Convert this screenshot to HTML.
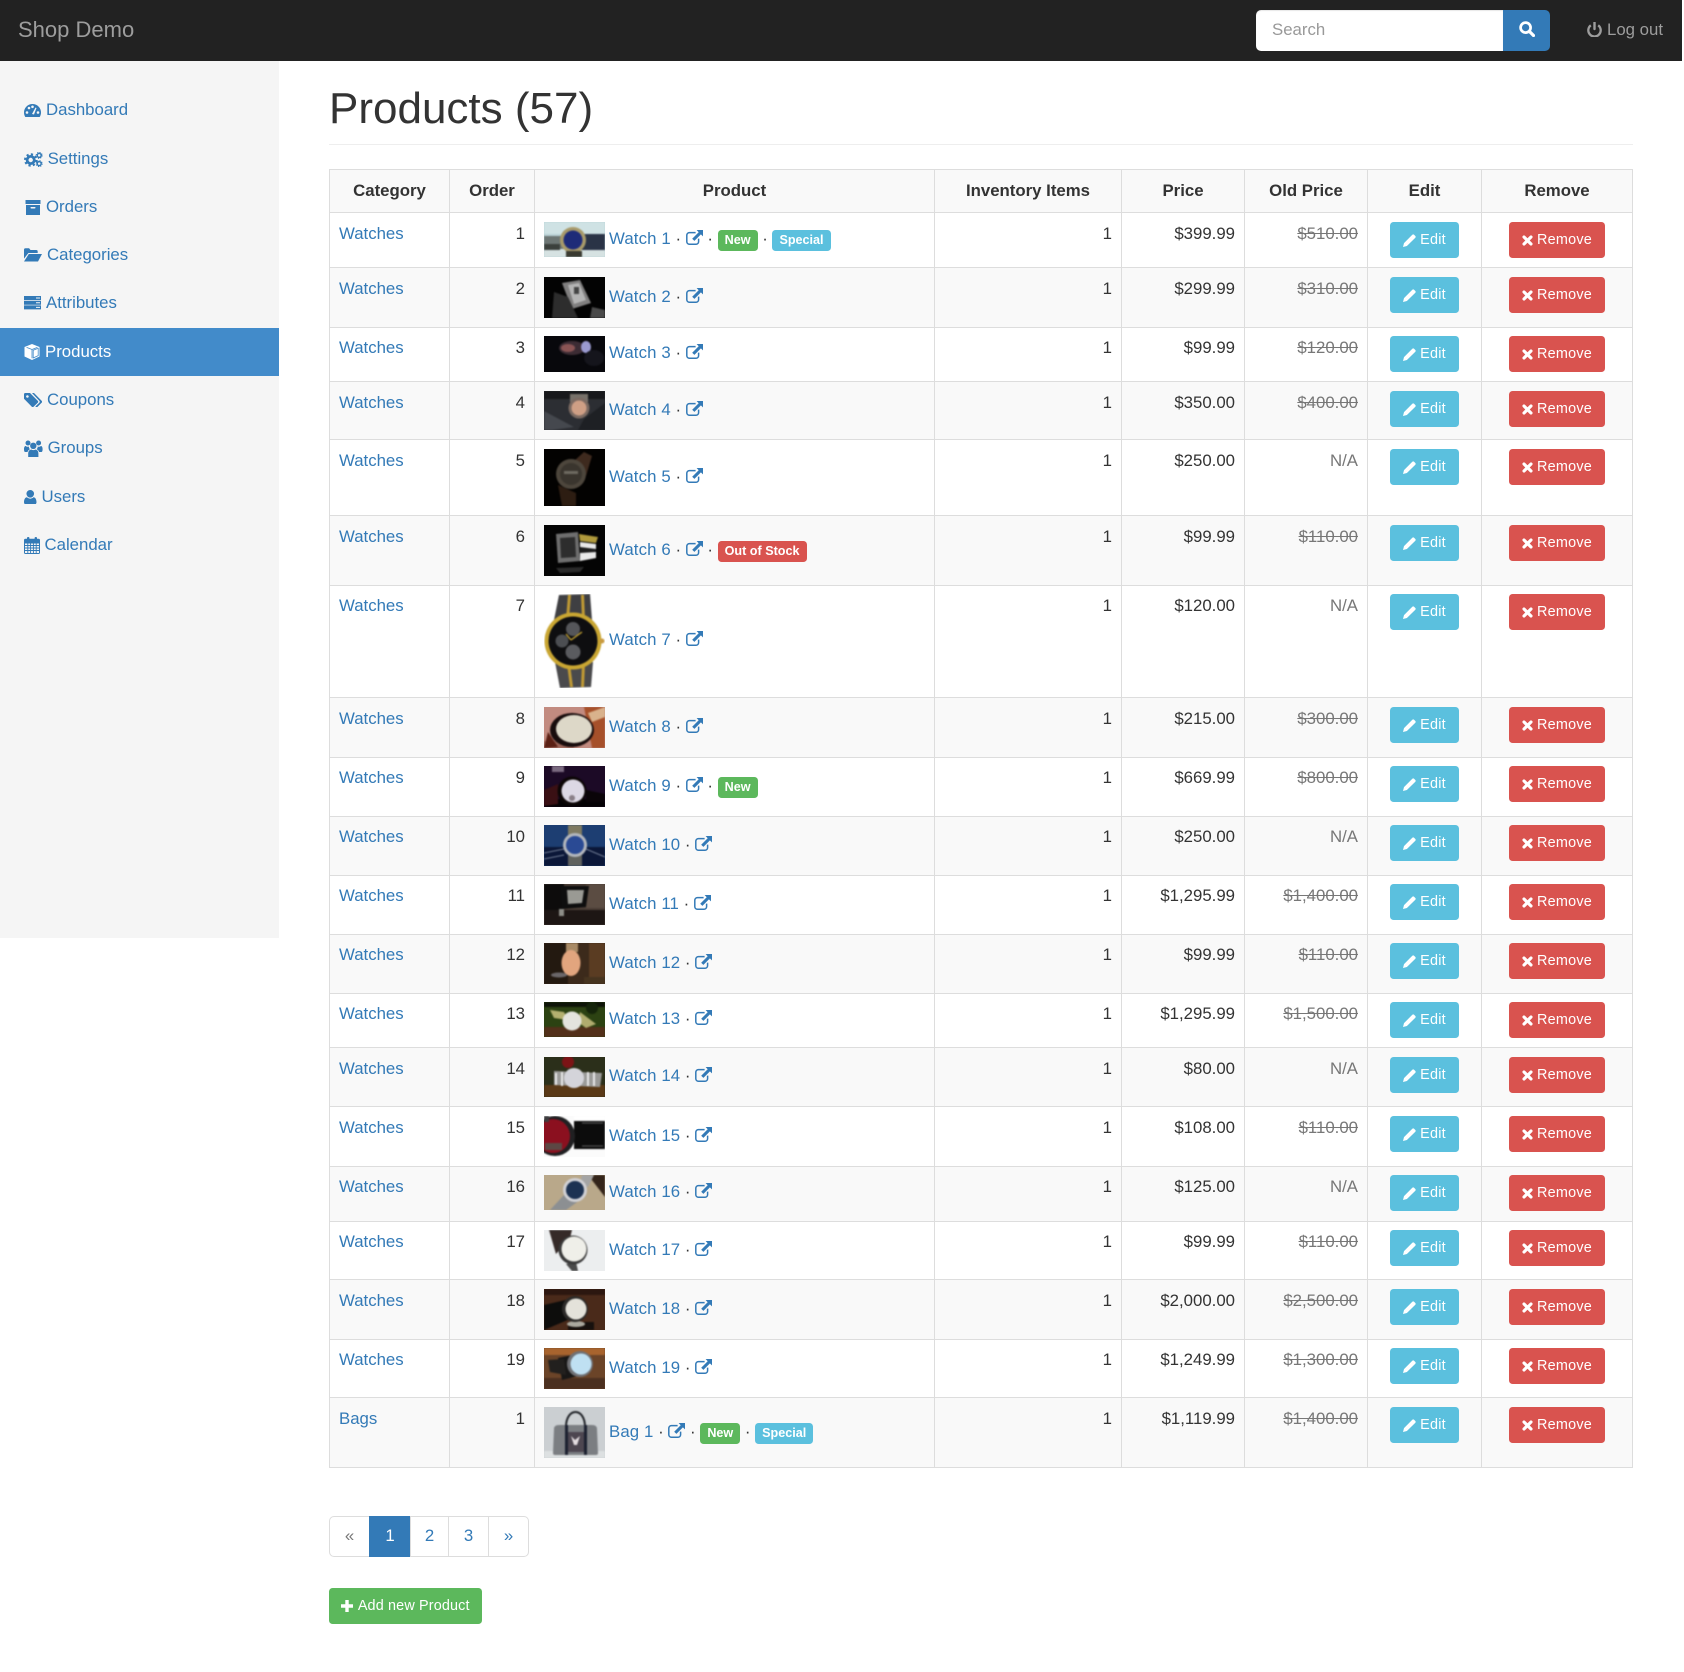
<!DOCTYPE html>
<html lang="en"><head><meta charset="utf-8"><title>Shop Demo</title>
<style>
html,body{margin:0;padding:0;background:#fff}
body{width:1684px;height:1672px;position:relative;overflow:hidden;font:16.8px/24px "Liberation Sans",Arial,sans-serif;color:#333}
a{color:#337ab7;text-decoration:none}
svg{display:block;fill:currentColor}
.nav{position:absolute;left:0;top:0;width:1682px;height:61px;background:#222;color:#9d9d9d}
.brand{position:absolute;left:18px;top:13px;font-size:22px;line-height:33px;color:#9d9d9d}
.search{position:absolute;left:1256px;top:10px;width:247px;height:41px;box-sizing:border-box;background:#fff;border-radius:5px 0 0 5px;color:#999;padding:7.5px 0 0 16px;box-shadow:inset 0 1px 1px rgba(0,0,0,.1)}
.sb{position:absolute;left:1503px;top:10px;width:47px;height:41px;background:#337ab7;border-radius:0 5px 5px 0;color:#fff}
.sb svg{position:absolute;left:16px;top:10.5px}
.out{position:absolute;left:1587px;top:17.5px;display:flex;align-items:center;gap:5px;color:#9d9d9d}
.side{position:absolute;left:0;top:61px;width:279px;height:852px;background:#f5f5f5;margin:0;padding:25px 0 0;list-style:none}
.side li{height:48px}
.side li.w{height:49px}
.side a{display:flex;align-items:center;gap:5px;height:48px;padding-left:24px;line-height:46px;width:255px}
.side li.on a{background:#428bca;color:#fff}
h1{position:absolute;left:329px;top:83px;margin:0;font-size:44px;line-height:52px;font-weight:400;color:#333}
.hr{position:absolute;left:329px;top:144px;width:1304px;height:1px;background:#eee}
table{position:absolute;left:329px;top:169px;width:1304px;border-collapse:collapse;table-layout:fixed}
th,td{border:1px solid #ddd;padding:9px 9px 0;vertical-align:top;text-align:left}
th{padding:9px 0 0;text-align:center;font-weight:700;background:#f9f9f9;color:#333}
tbody tr:nth-child(even) td{background:#f9f9f9}
tr.m td{padding-top:8px}
.r{text-align:right}
td.g{color:#777}
.p{display:flex;align-items:center}
.p svg.t{flex:none;margin-right:4px}
.p>span{position:relative;top:-1px;white-space:pre}
.p>span.q{top:0}
.p>span>a{letter-spacing:.12px}
.x{display:inline-block;vertical-align:-1px;color:#337ab7}
.lb{display:inline-block;height:21px;line-height:21px;padding:0 7px;margin:0;border-radius:3.6px;font-size:12.6px;font-weight:700;color:#fff;vertical-align:-1px;position:relative;top:-1px}
.gr{background:#5cb85c}.bl{background:#5bc0de}.rd{background:#d9534f}
.btn{display:flex;align-items:center;justify-content:center;gap:4px;height:36px;margin:0 auto;border-radius:3.6px;font-size:14.4px;line-height:20px;letter-spacing:.25px;color:#fff;box-sizing:border-box}
.ed{width:69px;background:#5bc0de}.rm{width:96px;background:#d9534f}
td.b{padding-left:0;padding-right:0}
.pg{position:absolute;left:329px;top:1516px;height:41px;display:flex;box-sizing:border-box}
.pg a{box-sizing:border-box;height:41px;border:1px solid #ddd;margin-left:-1px;padding-bottom:2px;display:flex;align-items:center;justify-content:center;background:#fff}
.pg a:first-child{margin-left:0;border-radius:5px 0 0 5px;color:#777}
.pg a:last-child{border-radius:0 5px 5px 0}
.pg a.on{background:#337ab7;border-color:#337ab7;color:#fff}
.add{position:absolute;left:329px;top:1588px;width:153px;height:36px;background:#5cb85c;border-radius:3.6px;color:#fff;display:flex;align-items:center;justify-content:center;gap:4.5px;font-size:14.4px;line-height:20px;letter-spacing:.15px}
.bl3{filter:blur(.8px)}
</style></head><body>
<svg width="0" height="0" style="position:absolute">
<symbol id="ext" viewBox="0 0 17 15"><path d="M12.6 8.6v3a2.6 2.6 0 0 1-2.6 2.6H3.4A2.6 2.6 0 0 1 .8 11.6V5.2a2.6 2.6 0 0 1 2.6-2.6h6.2" fill="none" stroke="currentColor" stroke-width="1.5"/><path d="M10.6 0H17v6.4L14.9 4.4 8.4 10.9 6.2 8.8 12.7 2.2Z"/></symbol>
<symbol id="pen" viewBox="0 0 13 13"><path d="M0 13 1 9.1 9.2.9a1.4 1.4 0 0 1 2 0l1 1a1.4 1.4 0 0 1 0 2L3.9 12Z"/></symbol>
<symbol id="cl" viewBox="0 0 11 11"><path d="M2 2 9 9M9 2 2 9" stroke="currentColor" stroke-width="3.1" fill="none" stroke-linecap="round"/></symbol>
<symbol id="plus" viewBox="0 0 12 12"><path d="M4.3 0h3.4v4.3H12v3.4H7.700V12H4.300V7.700H0V4.300h4.300Z"/></symbol>
</svg>

<div class="nav">
<a class="brand">Shop Demo</a>
<div class="search">Search</div>
<div class="sb"><svg width="16" height="16" viewBox="0 0 16 16"><circle cx="6.600" cy="6.600" r="5" fill="none" stroke="currentColor" stroke-width="2.700"/><path d="M10.500 10.500 14.500 14.500" stroke="currentColor" stroke-width="3.200" stroke-linecap="round"/></svg></div>
<a class="out"><svg width="15" height="15" viewBox="0 0 15 15"><path d="M3.800 3.300a6.200 6.200 0 1 0 7.400 0" fill="none" stroke="currentColor" stroke-width="2.300"/><path d="M7.500 .5v6.500" stroke="currentColor" stroke-width="2.400" stroke-linecap="round"/></svg>Log out</a>
</div>

<ul class="side">
<li class="w"><a><svg width="17" height="13" viewBox="0 0 17 13"><path d="M0 8.500a8.500 8.500 0 0 1 17 0c0 1.700-.5 3.200-1.300 4.500H1.300C.5 11.700 0 10.200 0 8.500Z"/><g fill="#f5f5f5"><circle cx="3" cy="8.500" r="1.300"/><circle cx="5" cy="4" r="1.300"/><circle cx="8.500" cy="2.800" r="1.300"/><circle cx="14" cy="8.500" r="1.300"/><path d="M8 10 11.500 3.500 12.500 4 10 10.500Z"/></g></svg>Dashboard</a></li>
<li><a><svg width="18.600" height="15" viewBox="0 0 18.600 15"><circle cx="6.700" cy="8" r="3.600" fill="none" stroke="currentColor" stroke-width="2.800"/><circle cx="6.700" cy="8" r="5.700" fill="none" stroke="currentColor" stroke-width="2" stroke-dasharray="2.200 2.270"/><circle cx="15.200" cy="3.400" r="2" fill="none" stroke="currentColor" stroke-width="1.500"/><circle cx="15.200" cy="3.400" r="3" fill="none" stroke="currentColor" stroke-width="1" stroke-dasharray="1.100 1.250"/><circle cx="15.200" cy="11.600" r="2" fill="none" stroke="currentColor" stroke-width="1.500"/><circle cx="15.200" cy="11.600" r="3" fill="none" stroke="currentColor" stroke-width="1" stroke-dasharray="1.100 1.250"/></svg>Settings</a></li>
<li><a><svg width="17" height="15" viewBox="0 0 17 15" style="margin-left:1px;margin-right:-1px"><path d="M.5 0h15v4H.5ZM1 5h14v10H1Z"/><rect x="5.500" y="7" width="5" height="1.500" rx=".7" fill="#f5f5f5"/></svg>Orders</a></li>
<li><a><svg width="18" height="13.500" viewBox="0 0 18 13.500"><path d="M0 1.800A1.500 1.500 0 0 1 1.500.3h3.600L6.500 2h5.700A1.500 1.500 0 0 1 13.700 3.500V5H4.400L0 10.600Z"/><path d="M4.800 6H18l-4 7.500H0Z"/></svg>Categories</a></li>
<li class="w"><a><svg width="17" height="13.500" viewBox="0 0 17 13.500"><path d="M0 0h17v4H0ZM0 4.700h17v4H0ZM0 9.400h17v4H0Z"/><path d="M12 1.500h4v1h-4ZM12 6.200h4v1h-4ZM12 10.900h4v1h-4Z" fill="#f5f5f5"/></svg>Attributes</a></li>
<li class="on"><a><svg width="16" height="16" viewBox="0 0 16 16"><path d="M8 0 15.500 3V12.500L8 16 .5 12.500V3Z"/><path d="M2.600 3.400 8 5.500 13.400 3.400M8 5.500V14.300M9.200 6.300 14.200 4.300V11.600L9.200 14Z" fill="none" stroke="#428bca" stroke-width=".8"/></svg>Products</a></li>
<li><a><svg width="18" height="14" viewBox="0 0 18 14"><path fill-rule="evenodd" d="M0 1.300A1.300 1.300 0 0 1 1.300 0H6l7.700 7.800a1.400 1.400 0 0 1 0 2L9.700 13.600a1.400 1.400 0 0 1-2 0L0 5.800ZM3.400 2.200a1.300 1.300 0 1 0 .01 0Z"/><path d="M8 0h2l7.600 7.800a1.400 1.400 0 0 1 0 2l-4 3.900a1.400 1.400 0 0 1-2 0l-.2-.2L15.300 9.800a1.400 1.400 0 0 0 0-2Z"/></svg>Coupons</a></li>
<li class="w"><a><svg width="18.600" height="17" viewBox="0 0 18.600 17"><circle cx="4" cy="3" r="2.500"/><circle cx="14.600" cy="3" r="2.500"/><circle cx="9.300" cy="5.800" r="3.200"/><path d="M4.200 17V13a3.800 3.800 0 0 1 3-3.500c1.300.8 3 .8 4.200 0A3.800 3.800 0 0 1 14.400 13V17Z"/><path d="M0 9.200C0 7.200.7 6 1.700 6c1 .8 2.300 1 3.300.5-.3 1 .2 2 1 2.600A5 5 0 0 0 3.500 12H1.200C.5 12 0 11 0 9.200ZM18.600 9.200c0-2-.7-3.200-1.700-3.200-1 .8-2.300 1-3.300.5.3 1-.2 2-1 2.600a5 5 0 0 1 2.500 2.900h2.300c.7 0 1.200-1 1.200-2.800Z"/></svg>Groups</a></li>
<li><a><svg width="12.500" height="14.500" viewBox="0 0 12.500 14.500"><circle cx="6.250" cy="3.800" r="3.800"/><path d="M0 12.300c0-3 1.300-5 3-5 .9.900 2 1.400 3.250 1.400s2.300-.5 3.250-1.400c1.700 0 3 2 3 5 0 1.300-.9 2.200-2 2.200H2c-1.100 0-2-.9-2-2.200Z"/></svg>Users</a></li>
<li><a><svg width="16" height="17" viewBox="0 0 16 17" style="margin-right:-.5px"><rect x="0" y="1.800" width="16" height="15.200" rx="1.500"/><rect x="3" y="0" width="2.400" height="4.500" rx="1"/><rect x="10.600" y="0" width="2.400" height="4.500" rx="1"/><path d="M1 6h14v10H1Z" fill="#f5f5f5"/><path d="M1 6h14M1 8.500h14M1 11h14M1 13.500h14M3.800 6v10M6.600 6v10M9.400 6v10M12.200 6v10" stroke="currentColor" stroke-width=".9" fill="none"/></svg>Calendar</a></li>
</ul>

<h1>Products (57)</h1>
<div class="hr"></div>

<table>
<colgroup><col style="width:120px"><col style="width:85px"><col style="width:400px"><col style="width:187px"><col style="width:123px"><col style="width:123px"><col style="width:114px"><col style="width:151px"></colgroup>
<thead><tr style="height:43px"><th>Category</th><th>Order</th><th>Product</th><th>Inventory Items</th><th>Price</th><th>Old Price</th><th>Edit</th><th>Remove</th></tr></thead>
<tbody>

<tr style="height:55px"><td><a>Watches</a></td><td class="r">1</td><td><div class="p"><svg class="t" width="61" height="35"><rect width="61" height="35" fill="#b9d2d6"/><g class="bl3"><rect y="0" width="61" height="12" fill="#cfe2e4"/><rect y="14" width="28" height="14" fill="#6d7674"/><rect y="27" width="61" height="8" fill="#d6e2e2"/><rect y="22" width="16" height="6" fill="#3b403c"/><rect x="36" y="12" width="25" height="16" fill="#2a3346"/><circle cx="29" cy="18" r="13" fill="#a89a6a"/><circle cx="29" cy="18" r="9.500" fill="#1e2b78"/><rect x="22" y="29" width="16" height="6" fill="#3a3a30"/></g></svg><span class="q"><a>Watch 1</a> · <a class="x"><svg width="17" height="15"><use href="#ext"/></svg></a> · <b class="lb gr">New</b> · <b class="lb bl">Special</b></span></div></td><td class="r">1</td><td class="r">$399.99</td><td class="r g"><s>$510.00</s></td><td class="b"><a class="btn ed"><svg width="13" height="13"><use href="#pen"/></svg>Edit</a></td><td class="b"><a class="btn rm"><svg width="11" height="11"><use href="#cl"/></svg>Remove</a></td></tr>

<tr style="height:60px"><td><a>Watches</a></td><td class="r">2</td><td><div class="p"><svg class="t" width="61" height="41"><rect width="61" height="41" fill="#030303"/><g class="bl3"><path d="M18 6 36 3 47 26 28 32Z" fill="#807f7f"/><path d="M24 8 35 6 42 23 30 27Z" fill="#b4b4b4"/><path d="M30 10h5v7h-5Z" fill="#444"/><path d="M10 15 24 20 34 41H8Z" fill="#2d2d2d"/><path d="M48 30 61 33V41H46Z" fill="#4a4a4a"/></g></svg><span><a>Watch 2</a> · <a class="x"><svg width="17" height="15"><use href="#ext"/></svg></a></span></div></td><td class="r">1</td><td class="r">$299.99</td><td class="r g"><s>$310.00</s></td><td class="b"><a class="btn ed"><svg width="13" height="13"><use href="#pen"/></svg>Edit</a></td><td class="b"><a class="btn rm"><svg width="11" height="11"><use href="#cl"/></svg>Remove</a></td></tr>

<tr class="m" style="height:54px"><td><a>Watches</a></td><td class="r">3</td><td><div class="p"><svg class="t" width="61" height="36"><rect width="61" height="36" fill="#08080c"/><g class="bl3"><ellipse cx="28" cy="12" rx="13" ry="7" fill="#3c2c34"/><ellipse cx="24" cy="12" rx="7" ry="4" fill="#8a5454"/><ellipse cx="42" cy="11" rx="5" ry="6" fill="#9a9ad0"/><ellipse cx="50" cy="22" rx="10" ry="8" fill="#15151c"/></g></svg><span><a>Watch 3</a> · <a class="x"><svg width="17" height="15"><use href="#ext"/></svg></a></span></div></td><td class="r">1</td><td class="r">$99.99</td><td class="r g"><s>$120.00</s></td><td class="b"><a class="btn ed"><svg width="13" height="13"><use href="#pen"/></svg>Edit</a></td><td class="b"><a class="btn rm"><svg width="11" height="11"><use href="#cl"/></svg>Remove</a></td></tr>

<tr style="height:58px"><td><a>Watches</a></td><td class="r">4</td><td><div class="p"><svg class="t" width="61" height="39"><rect width="61" height="39" fill="#2c2e33"/><g class="bl3"><rect width="61" height="8" fill="#17181b"/><path d="M0 20 30 36 8 39H0Z" fill="#45484e"/><path d="M40 28 61 12V39H34Z" fill="#1e2024"/><rect x="26" y="3" width="18" height="8" fill="#77716a"/><circle cx="35" cy="17" r="10.500" fill="#7b6a62"/><circle cx="35" cy="17" r="7.500" fill="#cf9f85"/></g></svg><span><a>Watch 4</a> · <a class="x"><svg width="17" height="15"><use href="#ext"/></svg></a></span></div></td><td class="r">1</td><td class="r">$350.00</td><td class="r g"><s>$400.00</s></td><td class="b"><a class="btn ed"><svg width="13" height="13"><use href="#pen"/></svg>Edit</a></td><td class="b"><a class="btn rm"><svg width="11" height="11"><use href="#cl"/></svg>Remove</a></td></tr>

<tr style="height:76px"><td><a>Watches</a></td><td class="r">5</td><td><div class="p"><svg class="t" width="61" height="57"><rect width="61" height="57" fill="#030201"/><g class="bl3"><path d="M30 12 40 3 48 7 42 27Z" fill="#3e2a1e"/><path d="M14 36 32 44 32 57H18Z" fill="#2d1d12"/><circle cx="27" cy="25" r="15" fill="#4d463c"/><circle cx="27" cy="25" r="11" fill="#3a352e"/><path d="M20 22h14v3H20Z" fill="#6e6a60"/></g></svg><span><a>Watch 5</a> · <a class="x"><svg width="17" height="15"><use href="#ext"/></svg></a></span></div></td><td class="r">1</td><td class="r">$250.00</td><td class="r g">N/A</td><td class="b"><a class="btn ed"><svg width="13" height="13"><use href="#pen"/></svg>Edit</a></td><td class="b"><a class="btn rm"><svg width="11" height="11"><use href="#cl"/></svg>Remove</a></td></tr>

<tr style="height:70px"><td><a>Watches</a></td><td class="r">6</td><td><div class="p"><svg class="t" width="61" height="51"><rect width="61" height="51" fill="#040404"/><g class="bl3"><path d="M12 9 34 7 36 36 14 38Z" fill="#6e6e6e"/><path d="M16 13 31 12 32 32 17 33Z" fill="#2d2d2d"/><path d="M35 9 54 12 52 18 36 16Z" fill="#b09a3c"/><path d="M36 17 52 19 52 33 36 36Z" fill="#e8e8e8"/><path d="M36 22 52 24 52 27 36 28Z" fill="#1c1c1c"/><path d="M12 43 40 42 36 47 16 48Z" fill="#2a2a2a"/></g></svg><span class="q"><a>Watch 6</a> · <a class="x"><svg width="17" height="15"><use href="#ext"/></svg></a> · <b class="lb rd">Out of Stock</b></span></div></td><td class="r">1</td><td class="r">$99.99</td><td class="r g"><s>$110.00</s></td><td class="b"><a class="btn ed"><svg width="13" height="13"><use href="#pen"/></svg>Edit</a></td><td class="b"><a class="btn rm"><svg width="11" height="11"><use href="#cl"/></svg>Remove</a></td></tr>

<tr class="m" style="height:112px"><td><a>Watches</a></td><td class="r">7</td><td><div class="p"><svg class="t" width="61" height="94"><rect width="61" height="94" fill="#fff"/><g class="bl3"><path d="M15 1 46 0 48 26 10 26Z" fill="#3f3f42"/><path d="M11 68 49 68 47 93 16 94Z" fill="#4a4a4c"/><path d="M24 1h3l-2 24h-3ZM37 1h3l1 24h-3ZM23 70h3l3 23h-3ZM38 70h3l-1 23h-3Z" fill="#c09a34"/><circle cx="29" cy="47" r="28.500" fill="#c9a632"/><circle cx="29" cy="47" r="24.500" fill="#0e0e10"/><circle cx="29" cy="35" r="7" fill="#55565a"/><circle cx="18" cy="47" r="6.500" fill="#4c4e52"/><circle cx="29" cy="58" r="7.500" fill="#5a5b5f"/><path d="M27 46 38 38M27 46 22 40" stroke="#c9a632" stroke-width="1.300" fill="none"/><circle cx="58" cy="47" r="2.500" fill="#c99a40"/></g></svg><span><a>Watch 7</a> · <a class="x"><svg width="17" height="15"><use href="#ext"/></svg></a></span></div></td><td class="r">1</td><td class="r">$120.00</td><td class="r g">N/A</td><td class="b"><a class="btn ed"><svg width="13" height="13"><use href="#pen"/></svg>Edit</a></td><td class="b"><a class="btn rm"><svg width="11" height="11"><use href="#cl"/></svg>Remove</a></td></tr>

<tr style="height:60px"><td><a>Watches</a></td><td class="r">8</td><td><div class="p"><svg class="t" width="61" height="41"><rect width="61" height="41" fill="#c28b80"/><g class="bl3"><path d="M40 0H61V41H48Z" fill="#a6502a"/><path d="M44 6 61 0V10L48 15Z" fill="#d9b28c"/><rect y="34" width="30" height="7" fill="#9a6458"/><ellipse cx="28" cy="23" rx="22" ry="17" fill="#180c0c"/><ellipse cx="30" cy="22" rx="18" ry="14" fill="#ddd8c8"/><path d="M4 25 14 40 0 41Z" fill="#5a2014"/></g></svg><span><a>Watch 8</a> · <a class="x"><svg width="17" height="15"><use href="#ext"/></svg></a></span></div></td><td class="r">1</td><td class="r">$215.00</td><td class="r g"><s>$300.00</s></td><td class="b"><a class="btn ed"><svg width="13" height="13"><use href="#pen"/></svg>Edit</a></td><td class="b"><a class="btn rm"><svg width="11" height="11"><use href="#cl"/></svg>Remove</a></td></tr>

<tr class="m" style="height:59px"><td><a>Watches</a></td><td class="r">9</td><td><div class="p"><svg class="t" width="61" height="41"><rect width="61" height="41" fill="#1c0a26"/><g class="bl3"><rect x="8" width="12" height="6" fill="#7a6a80"/><rect y="33" width="61" height="8" fill="#040204"/><path d="M0 24 14 18 14 38 0 40Z" fill="#3a1014"/><circle cx="28" cy="25" r="14.500" fill="#0c0606"/><circle cx="29" cy="25" r="11.500" fill="#dcd8e4"/><circle cx="28" cy="32" r="3" fill="#8a8088"/><path d="M42 24 61 28V36H42Z" fill="#0a0408"/></g></svg><span class="q"><a>Watch 9</a> · <a class="x"><svg width="17" height="15"><use href="#ext"/></svg></a> · <b class="lb gr">New</b></span></div></td><td class="r">1</td><td class="r">$669.99</td><td class="r g"><s>$800.00</s></td><td class="b"><a class="btn ed"><svg width="13" height="13"><use href="#pen"/></svg>Edit</a></td><td class="b"><a class="btn rm"><svg width="11" height="11"><use href="#cl"/></svg>Remove</a></td></tr>

<tr class="m" style="height:59px"><td><a>Watches</a></td><td class="r">10</td><td><div class="p"><svg class="t" width="61" height="41"><rect width="61" height="41" fill="#1d3e72"/><g class="bl3"><rect y="22" width="61" height="19" fill="#0b1738"/><rect x="24" width="14" height="10" fill="#7e7a62"/><rect x="24" y="30" width="14" height="11" fill="#60625e"/><circle cx="31" cy="20" r="12" fill="#b2b6bc"/><circle cx="31" cy="20" r="9" fill="#2a4a94"/><path d="M0 28 20 24M42 24 61 32M0 34 20 30" stroke="#8a96ac" stroke-width=".8" fill="none"/></g></svg><span><a>Watch 10</a> · <a class="x"><svg width="17" height="15"><use href="#ext"/></svg></a></span></div></td><td class="r">1</td><td class="r">$250.00</td><td class="r g">N/A</td><td class="b"><a class="btn ed"><svg width="13" height="13"><use href="#pen"/></svg>Edit</a></td><td class="b"><a class="btn rm"><svg width="11" height="11"><use href="#cl"/></svg>Remove</a></td></tr>

<tr class="m" style="height:59px"><td><a>Watches</a></td><td class="r">11</td><td><div class="p"><svg class="t" width="61" height="41"><rect width="61" height="41" fill="#4b3e36"/><g class="bl3"><rect width="20" height="26" fill="#0d0c0c"/><rect y="26" width="61" height="15" fill="#1d1614"/><rect x="42" width="19" height="24" fill="#5b4c42"/><path d="M17 2H45L42 23 18 25Z" fill="#0e0e0e"/><path d="M23 6H40L38 19 24 20Z" fill="#9a9a94"/><rect x="15" y="25" width="5" height="7" fill="#8e8e88"/></g></svg><span><a>Watch 11</a> · <a class="x"><svg width="17" height="15"><use href="#ext"/></svg></a></span></div></td><td class="r">1</td><td class="r">$1,295.99</td><td class="r g"><s>$1,400.00</s></td><td class="b"><a class="btn ed"><svg width="13" height="13"><use href="#pen"/></svg>Edit</a></td><td class="b"><a class="btn rm"><svg width="11" height="11"><use href="#cl"/></svg>Remove</a></td></tr>

<tr class="m" style="height:59px"><td><a>Watches</a></td><td class="r">12</td><td><div class="p"><svg class="t" width="61" height="41"><rect width="61" height="41" fill="#3c2a1b"/><g class="bl3"><rect x="0" y="0" width="24" height="41" fill="#231910"/><rect x="45" y="0" width="16" height="41" fill="#5a3c22"/><rect x="22" y="0" width="12" height="9" fill="#a88a66"/><ellipse cx="27" cy="20" rx="9.500" ry="13" fill="#e2a57e"/><ellipse cx="15" cy="32" rx="8" ry="2.500" fill="#6a6668"/><rect x="40" y="34" width="21" height="7" fill="#46341f"/></g></svg><span><a>Watch 12</a> · <a class="x"><svg width="17" height="15"><use href="#ext"/></svg></a></span></div></td><td class="r">1</td><td class="r">$99.99</td><td class="r g"><s>$110.00</s></td><td class="b"><a class="btn ed"><svg width="13" height="13"><use href="#pen"/></svg>Edit</a></td><td class="b"><a class="btn rm"><svg width="11" height="11"><use href="#cl"/></svg>Remove</a></td></tr>

<tr class="m" style="height:54px"><td><a>Watches</a></td><td class="r">13</td><td><div class="p"><svg class="t" width="61" height="35"><rect width="61" height="35" fill="#2c4212"/><g class="bl3"><rect width="61" height="5" fill="#0e1408"/><rect y="25" width="61" height="10" fill="#53301a"/><path d="M6 8 20 10 24 18 10 16Z" fill="#b4b070"/><path d="M36 10 52 22 42 26 34 20Z" fill="#b0ac6e"/><circle cx="48" cy="6" r="6" fill="#15240a"/><circle cx="28" cy="19" r="9.500" fill="#e4e4de"/></g></svg><span><a>Watch 13</a> · <a class="x"><svg width="17" height="15"><use href="#ext"/></svg></a></span></div></td><td class="r">1</td><td class="r">$1,295.99</td><td class="r g"><s>$1,500.00</s></td><td class="b"><a class="btn ed"><svg width="13" height="13"><use href="#pen"/></svg>Edit</a></td><td class="b"><a class="btn rm"><svg width="11" height="11"><use href="#cl"/></svg>Remove</a></td></tr>

<tr style="height:59px"><td><a>Watches</a></td><td class="r">14</td><td><div class="p"><svg class="t" width="61" height="40"><rect width="61" height="40" fill="#2b2f1a"/><g class="bl3"><rect y="28" width="61" height="12" fill="#5a3916"/><circle cx="24" cy="5" r="6" fill="#7c1416"/><path d="M10 14 58 16 56 30 10 28Z" fill="#9a9a98"/><circle cx="30" cy="21" r="10" fill="#d4d4da"/><path d="M12 16v12M18 15v14M44 15v14M50 15v14" stroke="#e8e8e8" stroke-width="2" fill="none"/></g></svg><span><a>Watch 14</a> · <a class="x"><svg width="17" height="15"><use href="#ext"/></svg></a></span></div></td><td class="r">1</td><td class="r">$80.00</td><td class="r g">N/A</td><td class="b"><a class="btn ed"><svg width="13" height="13"><use href="#pen"/></svg>Edit</a></td><td class="b"><a class="btn rm"><svg width="11" height="11"><use href="#cl"/></svg>Remove</a></td></tr>

<tr style="height:60px"><td><a>Watches</a></td><td class="r">15</td><td><div class="p"><svg class="t" width="61" height="41"><rect width="61" height="41" fill="#fbfbfb"/><g class="bl3"><rect x="30" y="5" width="31" height="28" fill="#0c0c0c"/><rect x="30" width="31" height="4" fill="#fff"/><path d="M38 7h21M38 30h21" stroke="#aaa" stroke-width=".6" fill="none"/><circle cx="11" cy="20" r="20" fill="#202022"/><circle cx="9" cy="20" r="17" fill="#8b101f"/><rect x="1" y="27" width="17" height="7" fill="#5c4844"/><rect x="0" y="0" width="5" height="6" fill="#3c3c3e"/></g></svg><span><a>Watch 15</a> · <a class="x"><svg width="17" height="15"><use href="#ext"/></svg></a></span></div></td><td class="r">1</td><td class="r">$108.00</td><td class="r g"><s>$110.00</s></td><td class="b"><a class="btn ed"><svg width="13" height="13"><use href="#pen"/></svg>Edit</a></td><td class="b"><a class="btn rm"><svg width="11" height="11"><use href="#cl"/></svg>Remove</a></td></tr>

<tr class="m" style="height:55px"><td><a>Watches</a></td><td class="r">16</td><td><div class="p"><svg class="t" width="61" height="35"><rect width="61" height="35" fill="#b9a88a"/><g class="bl3"><path d="M44 0H61V22Z" fill="#33241a"/><path d="M6 35 20 20 36 25 22 35Z" fill="#8c8f92"/><path d="M38 0H50L44 12 36 10Z" fill="#a4a4a4"/><circle cx="31" cy="15" r="12" fill="#d0d0d4"/><circle cx="31" cy="15" r="9" fill="#1d3252"/></g></svg><span><a>Watch 16</a> · <a class="x"><svg width="17" height="15"><use href="#ext"/></svg></a></span></div></td><td class="r">1</td><td class="r">$125.00</td><td class="r g">N/A</td><td class="b"><a class="btn ed"><svg width="13" height="13"><use href="#pen"/></svg>Edit</a></td><td class="b"><a class="btn rm"><svg width="11" height="11"><use href="#cl"/></svg>Remove</a></td></tr>

<tr class="m" style="height:58px"><td><a>Watches</a></td><td class="r">17</td><td><div class="p"><svg class="t" width="61" height="41"><rect width="61" height="41" fill="#eceeef"/><g class="bl3"><path d="M5 0H28L26 8 12 24Z" fill="#352a28"/><path d="M22 34 32 32 34 41H28Z" fill="#4a4a4a"/><circle cx="29" cy="20" r="14.500" fill="#3a3a3a"/><circle cx="30" cy="19" r="12.500" fill="#efefe9"/></g></svg><span><a>Watch 17</a> · <a class="x"><svg width="17" height="15"><use href="#ext"/></svg></a></span></div></td><td class="r">1</td><td class="r">$99.99</td><td class="r g"><s>$110.00</s></td><td class="b"><a class="btn ed"><svg width="13" height="13"><use href="#pen"/></svg>Edit</a></td><td class="b"><a class="btn rm"><svg width="11" height="11"><use href="#cl"/></svg>Remove</a></td></tr>

<tr style="height:60px"><td><a>Watches</a></td><td class="r">18</td><td><div class="p"><svg class="t" width="61" height="41"><rect width="61" height="41" fill="#4a2a1a"/><g class="bl3"><rect width="61" height="6" fill="#2c1710"/><path d="M0 16 26 10 26 30 0 41Z" fill="#0d0d0c"/><rect x="24" y="33" width="26" height="8" fill="#17110e"/><ellipse cx="32" cy="35" rx="9" ry="3" fill="#aaa89e"/><circle cx="31" cy="20" r="13" fill="#2c2a28"/><circle cx="32" cy="20" r="10.500" fill="#e4e2da"/></g></svg><span><a>Watch 18</a> · <a class="x"><svg width="17" height="15"><use href="#ext"/></svg></a></span></div></td><td class="r">1</td><td class="r">$2,000.00</td><td class="r g"><s>$2,500.00</s></td><td class="b"><a class="btn ed"><svg width="13" height="13"><use href="#pen"/></svg>Edit</a></td><td class="b"><a class="btn rm"><svg width="11" height="11"><use href="#cl"/></svg>Remove</a></td></tr>

<tr class="m" style="height:58px"><td><a>Watches</a></td><td class="r">19</td><td><div class="p"><svg class="t" width="61" height="41"><rect width="61" height="41" fill="#6b4428"/><g class="bl3"><rect width="61" height="7" fill="#a8642e"/><rect y="30" width="61" height="11" fill="#4b3020"/><path d="M14 10 34 6 34 28 18 32Z" fill="#181716"/><path d="M4 12 20 11 22 27 6 24Z" fill="#22201e"/><circle cx="36" cy="16" r="13" fill="#6f7074"/><circle cx="37" cy="16" r="10.500" fill="#bfe0f2"/></g></svg><span><a>Watch 19</a> · <a class="x"><svg width="17" height="15"><use href="#ext"/></svg></a></span></div></td><td class="r">1</td><td class="r">$1,249.99</td><td class="r g"><s>$1,300.00</s></td><td class="b"><a class="btn ed"><svg width="13" height="13"><use href="#pen"/></svg>Edit</a></td><td class="b"><a class="btn rm"><svg width="11" height="11"><use href="#cl"/></svg>Remove</a></td></tr>

<tr style="height:70px"><td><a>Bags</a></td><td class="r">1</td><td><div class="p"><svg class="t" width="61" height="51"><rect width="61" height="51" fill="#cbcfd2"/><g class="bl3"><rect y="44" width="61" height="7" fill="#dde0e1"/><path d="M22 20C22 0 41 0 41 20" fill="none" stroke="#22252a" stroke-width="2"/><path d="M10 22 Q10 18 15 18H48Q53 18 53 22L54 46Q54 48 52 48H11Q9 48 9 46Z" fill="#7b7e82"/><rect x="21" y="18" width="3" height="30" fill="#1c2130"/><rect x="40" y="18" width="3" height="30" fill="#1c2130"/><rect x="24" y="25" width="16" height="20" fill="#4d4650"/><path d="M27 29 31 33 36 29 33 38 30 38Z" fill="#e4dde0"/></g></svg><span class="q"><a>Bag 1</a> · <a class="x"><svg width="17" height="15"><use href="#ext"/></svg></a> · <b class="lb gr">New</b> · <b class="lb bl">Special</b></span></div></td><td class="r">1</td><td class="r">$1,119.99</td><td class="r g"><s>$1,400.00</s></td><td class="b"><a class="btn ed"><svg width="13" height="13"><use href="#pen"/></svg>Edit</a></td><td class="b"><a class="btn rm"><svg width="11" height="11"><use href="#cl"/></svg>Remove</a></td></tr>

</tbody></table>

<div class="pg"><a style="width:41px">«</a><a class="on" style="width:42px">1</a><a style="width:39px">2</a><a style="width:41px">3</a><a style="width:41px">»</a></div>
<a class="add"><svg width="12" height="12"><use href="#plus"/></svg>Add new Product</a>
</body></html>
